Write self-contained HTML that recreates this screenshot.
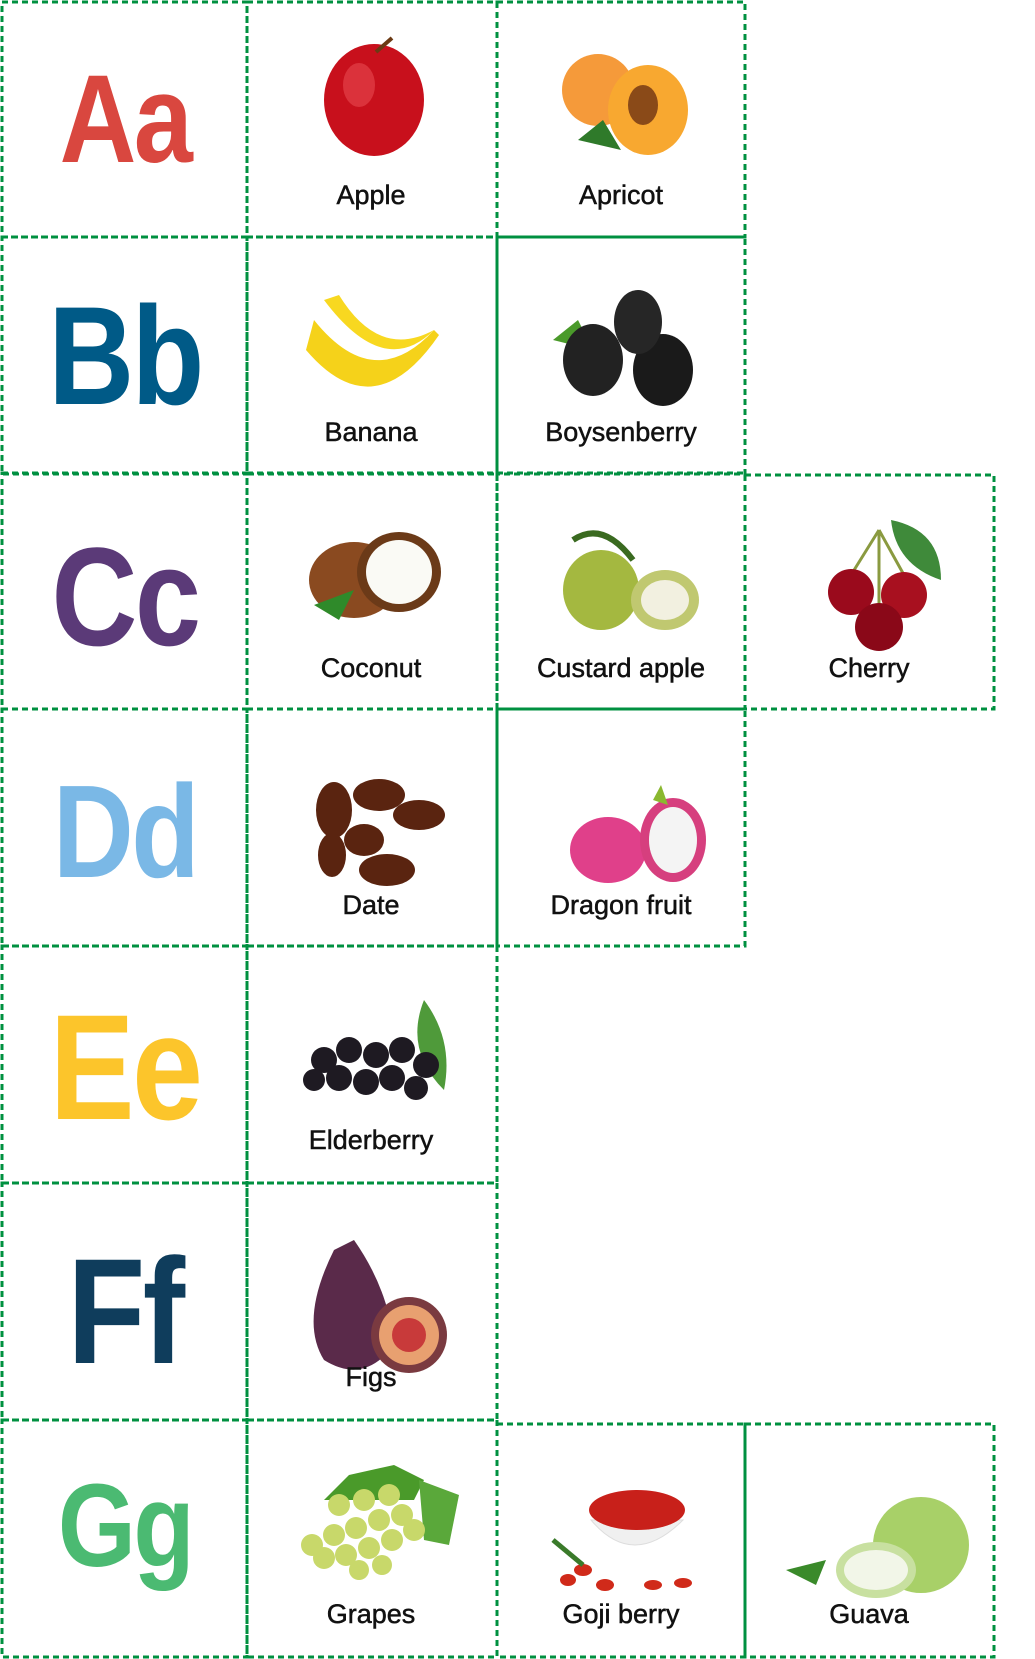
<!DOCTYPE html>
<html><head><meta charset="utf-8"><style>
body{margin:0;width:1035px;height:1659px;background:#fff;position:relative;overflow:hidden;font-family:"Liberation Sans",sans-serif}
.l{position:absolute;width:248px;text-align:center;font-weight:bold;line-height:1;letter-spacing:-3px;transform:scaleX(.85)}
.t{position:absolute;width:248px;text-align:center;font-size:27px;line-height:32px;color:#111;-webkit-text-stroke:.5px #111}
svg{position:absolute;left:0;top:0}
</style></head><body>
<svg width="1035" height="1659">
<g fill="none" stroke="#009040" stroke-width="3" stroke-dasharray="6 4">
<rect x="2" y="2" width="245" height="235"/><rect x="247" y="2" width="250" height="235"/><rect x="497" y="2" width="248" height="235"/>
<rect x="2" y="237" width="245" height="237"/><rect x="247" y="237" width="250" height="237"/><rect x="497" y="237" width="248" height="237"/>
<rect x="2" y="473" width="245" height="236"/><rect x="247" y="473" width="250" height="236"/><rect x="497" y="473" width="248" height="236"/><rect x="745" y="475" width="249" height="234"/>
<rect x="2" y="709" width="245" height="237"/><rect x="247" y="709" width="250" height="237"/><rect x="497" y="709" width="248" height="237"/>
<rect x="2" y="946" width="245" height="237"/><rect x="247" y="946" width="250" height="237"/>
<rect x="2" y="1183" width="245" height="237"/><rect x="247" y="1183" width="250" height="237"/>
<rect x="2" y="1420" width="245" height="237"/><rect x="247" y="1420" width="250" height="237"/><rect x="497" y="1424" width="248" height="233"/><rect x="745" y="1424" width="249" height="233"/>
</g>
<g transform="translate(-6,0)">
<ellipse cx="380" cy="100" rx="50" ry="56" fill="#c8101c"/><ellipse cx="365" cy="85" rx="16" ry="22" fill="#e84a50" opacity=".6"/><path d="M382 52 L398 38" stroke="#6b3a14" stroke-width="4"/>
<path d="M312 350 Q380 430 445 335 L440 330 Q380 395 320 320Z" fill="#f5d21a"/><path d="M330 300 Q390 380 440 330 Q385 360 345 295Z" fill="#f8d820"/>
<ellipse cx="360" cy="580" rx="45" ry="38" fill="#8a4a20"/><ellipse cx="405" cy="572" rx="42" ry="40" fill="#6b3a18"/><ellipse cx="405" cy="572" rx="33" ry="32" fill="#fafaf5"/><path d="M320 605 L360 590 L345 620Z" fill="#2f8a2a"/>
<g fill="#5a2410"><ellipse cx="340" cy="810" rx="18" ry="28"/><ellipse cx="385" cy="795" rx="26" ry="16"/><ellipse cx="425" cy="815" rx="26" ry="15"/><ellipse cx="370" cy="840" rx="20" ry="16"/><ellipse cx="393" cy="870" rx="28" ry="16"/><ellipse cx="338" cy="855" rx="14" ry="22"/></g>
<path d="M430 1000 Q460 1040 450 1090 Q410 1050 430 1000Z" fill="#4f9a3a"/>
<g fill="#1e1a22"><circle cx="330" cy="1060" r="13"/><circle cx="355" cy="1050" r="13"/><circle cx="382" cy="1055" r="13"/><circle cx="408" cy="1050" r="13"/><circle cx="432" cy="1065" r="13"/><circle cx="345" cy="1078" r="13"/><circle cx="372" cy="1082" r="13"/><circle cx="398" cy="1078" r="13"/><circle cx="422" cy="1088" r="12"/><circle cx="320" cy="1080" r="11"/></g>
<path d="M340 1250 Q305 1320 330 1360 Q370 1385 400 1345 Q395 1290 360 1240Z" fill="#5a2a4a"/><circle cx="415" cy="1335" r="38" fill="#7a3a40"/><circle cx="415" cy="1335" r="30" fill="#e8a070"/><circle cx="415" cy="1335" r="17" fill="#c83a3a"/>
<path d="M330 1500 L355 1475 L400 1465 L430 1480 L420 1500Z" fill="#4a9a2a"/><path d="M425 1480 L465 1495 L455 1545 L430 1540Z" fill="#5aa83a"/>
<g fill="#c8d86a"><circle cx="318" cy="1545" r="11"/><circle cx="340" cy="1535" r="11"/><circle cx="362" cy="1528" r="11"/><circle cx="385" cy="1520" r="11"/><circle cx="408" cy="1515" r="11"/><circle cx="330" cy="1558" r="11"/><circle cx="352" cy="1555" r="11"/><circle cx="375" cy="1548" r="11"/><circle cx="398" cy="1540" r="11"/><circle cx="420" cy="1530" r="11"/><circle cx="345" cy="1505" r="11"/><circle cx="370" cy="1500" r="11"/><circle cx="395" cy="1495" r="11"/><circle cx="365" cy="1570" r="10"/><circle cx="388" cy="1565" r="10"/></g>
</g>
<g transform="translate(-7,0)">
<circle cx="605" cy="90" r="36" fill="#f59a3a"/><ellipse cx="655" cy="110" rx="40" ry="45" fill="#f8a830"/><ellipse cx="650" cy="105" rx="15" ry="20" fill="#8a4a18"/><path d="M585 140 L610 120 L628 150Z" fill="#2f7a2a"/>
<path d="M560 340 L585 320 L600 350Z" fill="#4a9a2a"/><ellipse cx="600" cy="360" rx="30" ry="36" fill="#222"/><ellipse cx="670" cy="370" rx="30" ry="36" fill="#1a1a1a"/><ellipse cx="645" cy="322" rx="24" ry="32" fill="#262626"/>
<path d="M580 540 Q610 520 640 560" stroke="#3a6a20" stroke-width="6" fill="none"/><ellipse cx="608" cy="590" rx="38" ry="40" fill="#a4b840"/><ellipse cx="672" cy="600" rx="34" ry="30" fill="#c0c870"/><ellipse cx="672" cy="600" rx="24" ry="20" fill="#f2f0e0"/>
<ellipse cx="615" cy="850" rx="38" ry="33" fill="#e0408a"/><ellipse cx="680" cy="840" rx="33" ry="42" fill="#d63f7e"/><ellipse cx="680" cy="840" rx="24" ry="33" fill="#f4f4f4"/><path d="M660 800 L668 785 L675 805" fill="#8ab830"/>
<path d="M598 1520 Q640 1570 690 1520Z" fill="#f0f0f0" stroke="#ddd"/><ellipse cx="644" cy="1510" rx="48" ry="20" fill="#c8201a"/><g fill="#d02a1a"><ellipse cx="590" cy="1570" rx="9" ry="6"/><ellipse cx="612" cy="1585" rx="9" ry="6"/><ellipse cx="660" cy="1585" rx="9" ry="5"/><ellipse cx="690" cy="1583" rx="9" ry="5"/><ellipse cx="575" cy="1580" rx="8" ry="6"/></g><path d="M560 1540 L590 1565" stroke="#3a7a2a" stroke-width="5"/>
</g>
<g transform="translate(-14,0)">
<path d="M893 530 L865 575 M893 530 L918 575 M893 530 L893 605" stroke="#8a9a40" stroke-width="3" fill="none"/><path d="M905 520 Q955 530 955 580 Q910 565 905 520Z" fill="#3f8a3a"/><circle cx="865" cy="592" r="23" fill="#9a0a1c"/><circle cx="918" cy="595" r="23" fill="#a8101f"/><circle cx="893" cy="627" r="24" fill="#8a0818"/>
<path d="M800 1570 L840 1560 L830 1585Z" fill="#3a8a2a"/><circle cx="935" cy="1545" r="48" fill="#a8d068"/><ellipse cx="890" cy="1570" rx="40" ry="28" fill="#c8e0a0"/><ellipse cx="890" cy="1570" rx="32" ry="20" fill="#f2f6e8"/>
</g>
</svg>
<div class="l" style="left:1px;top:57px;font-size:125px;color:#d9473f">Aa</div>
<div class="l" style="left:1px;top:286px;font-size:140px;color:#005a87">Bb</div>
<div class="l" style="left:1px;top:527px;font-size:140px;color:#5b3a78">Cc</div>
<div class="l" style="left:1px;top:766px;font-size:132px;color:#7ab8e6">Dd</div>
<div class="l" style="left:1px;top:992px;font-size:150px;color:#fcc52b">Ee</div>
<div class="l" style="left:1px;top:1236px;font-size:150px;color:#0f3d5c">Ff</div>
<div class="l" style="left:1px;top:1467px;font-size:118px;color:#4bba72">Gg</div>
<div class="t" style="left:247px;top:179px">Apple</div>
<div class="t" style="left:497px;top:179px">Apricot</div>
<div class="t" style="left:247px;top:416px">Banana</div>
<div class="t" style="left:497px;top:416px">Boysenberry</div>
<div class="t" style="left:247px;top:652px">Coconut</div>
<div class="t" style="left:497px;top:652px">Custard apple</div>
<div class="t" style="left:745px;top:652px">Cherry</div>
<div class="t" style="left:247px;top:889px">Date</div>
<div class="t" style="left:497px;top:889px">Dragon fruit</div>
<div class="t" style="left:247px;top:1124px">Elderberry</div>
<div class="t" style="left:247px;top:1361px">Figs</div>
<div class="t" style="left:247px;top:1598px">Grapes</div>
<div class="t" style="left:497px;top:1598px">Goji berry</div>
<div class="t" style="left:745px;top:1598px">Guava</div>
</body></html>
